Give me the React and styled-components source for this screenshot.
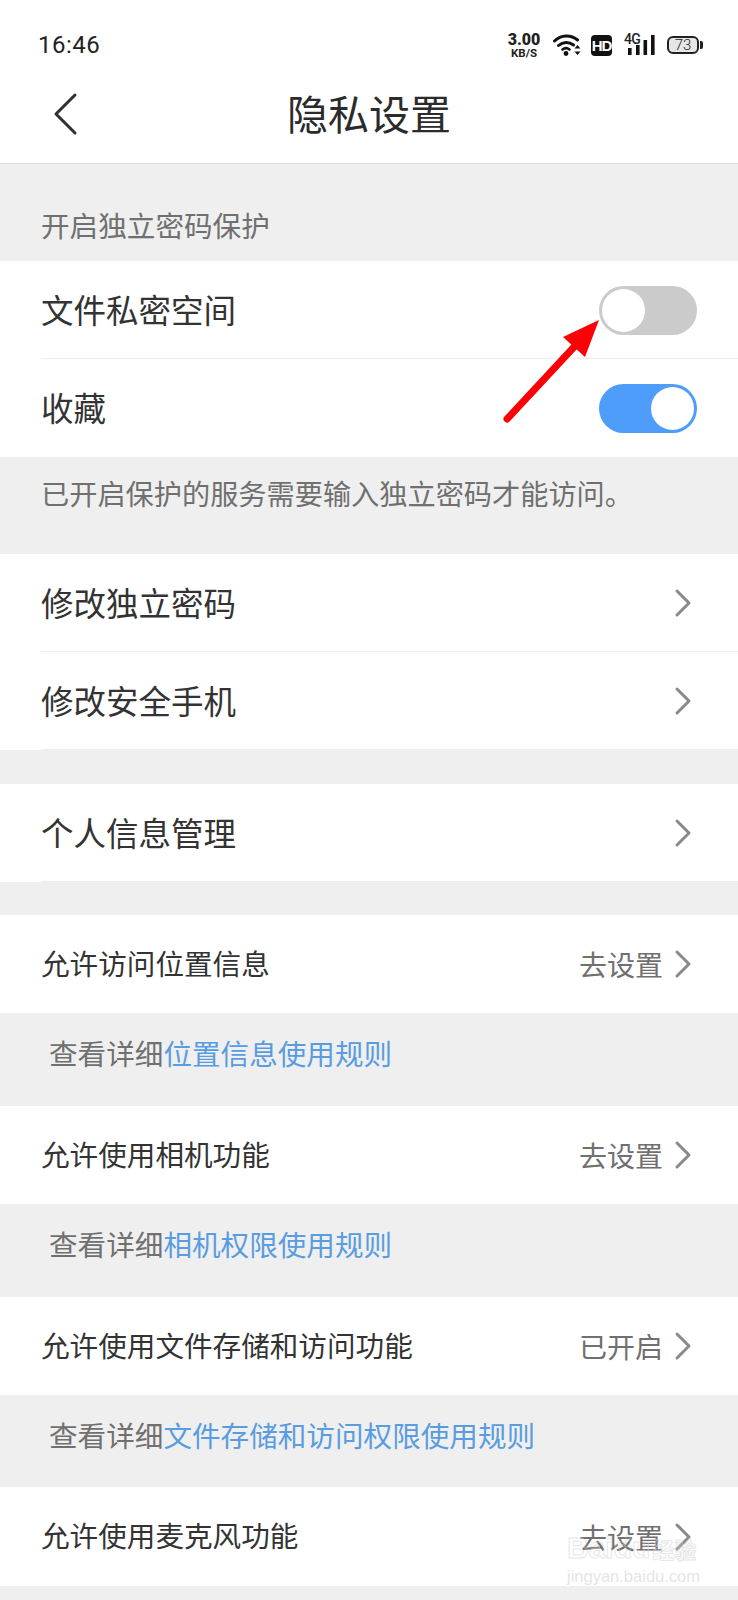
import React from "react";
import styled, { createGlobalStyle } from "styled-components";

const GlobalStyle = createGlobalStyle`
  html, body {
    margin: 0;
    padding: 0;
    background: #efefef;
  }
  * {
    box-sizing: border-box;
  }
`;

const Page = styled.div`
  position: relative;
  width: 738px;
  height: 1600px;
  overflow: hidden;
  background: #efefef;
  font-family: "Noto Sans CJK SC", "Noto Sans", sans-serif;
  color: #333;
`;

const StatusBar = styled.div`
  height: 72px;
  background: #fff;
  display: flex;
  align-items: center;
  justify-content: space-between;
  padding: 18px 36px 0 38px;
`;

const Time = styled.div`
  font-family: Roboto, sans-serif;
  font-size: 24px;
  color: #222;
  letter-spacing: 0.5px;
`;

const StatusIcons = styled.div`
  display: flex;
  align-items: center;
`;

const Speed = styled.div`
  width: 36px;
  margin-right: 11px;
  display: flex;
  flex-direction: column;
  align-items: center;
  font-family: Roboto, sans-serif;
  font-weight: 700;
  color: #222;
  b {
    font-size: 16px;
    line-height: 15px;
  }
  span {
    font-size: 11.5px;
    line-height: 12px;
  }
`;

const HdBadge = styled.div`
  width: 21px;
  height: 21px;
  margin: 0 12px 0 10px;
  border-radius: 4px;
  background: #111;
  color: #fff;
  font-family: "Liberation Sans", sans-serif;
  font-size: 15px;
  font-weight: 700;
  letter-spacing: -1px;
  display: flex;
  align-items: center;
  justify-content: center;
`;

const Signal = styled.div`
  position: relative;
  width: 32px;
  height: 22px;
  margin-right: 11px;
`;

const SignalLabel = styled.span`
  position: absolute;
  left: 0;
  top: -3px;
  font-family: Roboto, sans-serif;
  font-size: 14px;
  font-weight: 500;
  letter-spacing: -0.8px;
  color: #222;
`;

const Battery = styled.div`
  position: relative;
  width: 32px;
  height: 18px;
  margin-right: 3px;
  border: 2px solid #222;
  border-radius: 6px;
  background: #e6e6e6;
  color: #222;
  font-family: Roboto, sans-serif;
  font-size: 15px;
  font-weight: 300;
  display: flex;
  align-items: center;
  justify-content: center;
  &::after {
    content: "";
    position: absolute;
    right: -6px;
    top: 3px;
    width: 3px;
    height: 8px;
    border-radius: 0 2px 2px 0;
    background: #222;
  }
`;

const NavBar = styled.div`
  position: relative;
  height: 92px;
  background: #fff;
  border-bottom: 1px solid #dedede;
  display: flex;
  align-items: center;
  justify-content: center;
  padding-bottom: 11px;
`;

const BackIcon = styled.svg`
  position: absolute;
  left: 52px;
  top: 20px;
`;

const Title = styled.div`
  font-size: 41px;
  line-height: 48px;
  color: #2b2b2b;
`;

const SectionLabel = styled.div`
  height: 97px;
  padding: 41px 0 0 41px;
  font-size: 28.6px;
  line-height: 40px;
  color: #707070;
`;

const Row = styled.div`
  height: ${(p) => p.$height || 98}px;
  background: #fff;
  display: flex;
  align-items: center;
  padding-right: ${(p) => p.$right || 46}px;
  padding-left: 41px;
  position: relative;
  font-size: ${(p) => (p.$small ? 28.6 : 32.5)}px;
  color: #333;
  ${(p) =>
    p.$divider &&
    `&::after {
      content: "";
      position: absolute;
      left: 41px;
      right: 0;
      bottom: 0;
      height: 1px;
      background: #ececec;
    }`}
`;

const RowLabel = styled.div`
  flex: 1;
  line-height: 44px;
  padding-bottom: 3px;
`;

const RowValue = styled.div`
  font-size: 28px;
  line-height: 40px;
  color: #707070;
  margin-right: 11px;
`;

const Switch = styled.div`
  width: 98px;
  height: 49px;
  border-radius: 25px;
  padding: 3px;
  display: flex;
  justify-content: ${(p) => (p.$on ? "flex-end" : "flex-start")};
  background: ${(p) => (p.$on ? "#4f9dfb" : "#cbcbcb")};
`;

const Knob = styled.div`
  width: 43px;
  height: 43px;
  border-radius: 50%;
  background: #fff;
`;

const Note = styled.div`
  height: ${(p) => p.$height || 96}px;
  padding: ${(p) => p.$top || 16}px 0 0 ${(p) => p.$left || 41}px;
  font-size: ${(p) => p.$size || 28.6}px;
  line-height: 40px;
  color: #707070;
  white-space: nowrap;
`;

const LinkText = styled.span`
  color: #5a9ce0;
`;

const Gap = styled.div`
  height: ${(p) => p.$height || 33}px;
`;

const ArrowMark = styled.svg`
  position: absolute;
  left: 500px;
  top: 315px;
`;

const Watermark = styled.div`
  position: absolute;
  left: 567px;
  top: 1531px;
  width: 140px;
  color: transparent;
  opacity: 0.55;
`;

const WatermarkBrand = styled.div`
  display: flex;
  align-items: baseline;
  font-family: "Liberation Sans", sans-serif;
  font-size: 30px;
  line-height: 34px;
  font-weight: 700;
  -webkit-text-stroke: 1px #d4d4d4;
  span {
    font-family: "Noto Sans CJK SC", sans-serif;
    font-size: 22px;
    margin-left: 2px;
  }
`;

const WatermarkUrl = styled.div`
  margin-top: 2px;
  font-family: "Liberation Sans", sans-serif;
  font-size: 16.5px;
  line-height: 18px;
  color: #d0d0d0;
`;

const Chevron = () => (
  <svg width="18" height="30" viewBox="0 0 18 30" fill="none">
    <path
      d="M3 3 L15 15 L3 27"
      stroke="#8a8a8a"
      strokeWidth="3"
      strokeLinecap="round"
      strokeLinejoin="round"
    />
  </svg>
);

const WifiIcon = () => (
  <svg width="28" height="22" viewBox="0 0 28 22" fill="none">
    <path d="M1.5 7 C8 0.5 18 0.5 24.5 6" stroke="#111" strokeWidth="3" strokeLinecap="round" />
    <path d="M5.5 11.5 C10 7.5 16 7.5 20.5 11" stroke="#111" strokeWidth="3" strokeLinecap="round" />
    <path d="M9.5 15.5 C11.5 14 14.5 14 16.5 15.5" stroke="#111" strokeWidth="2.6" strokeLinecap="round" />
    <circle cx="13" cy="19.5" r="2.4" fill="#111" />
    <path d="M24.5 11 L27.5 14.5 H21.5 Z" fill="#111" />
    <path d="M24.5 21 L27.5 17.5 H21.5 Z" fill="#111" />
  </svg>
);

const SignalBars = () => (
  <svg width="32" height="22" viewBox="0 0 32 22" style={{ position: "absolute", left: 0, top: 0 }}>
    <rect x="4" y="14" width="3.6" height="7" fill="#111" />
    <rect x="12" y="11" width="3.6" height="10" fill="#111" />
    <rect x="19.5" y="6" width="3.6" height="15" fill="#111" />
    <rect x="27" y="1" width="3.6" height="20" fill="#111" />
  </svg>
);

const settingRows = [
  { label: "允许访问位置信息", value: "去设置", before: "查看详细", link: "位置信息使用规则", noteHeight: 93 },
  { label: "允许使用相机功能", value: "去设置", before: "查看详细", link: "相机权限使用规则", noteHeight: 93 },
  { label: "允许使用文件存储和访问功能", value: "已开启", before: "查看详细", link: "文件存储和访问权限使用规则", noteHeight: 92 },
];

export default function App() {
  return (
    <Page>
      <GlobalStyle />
      <StatusBar>
        <Time>16:46</Time>
        <StatusIcons>
          <Speed>
            <b>3.00</b>
            <span>KB/S</span>
          </Speed>
          <WifiIcon />
          <HdBadge>HD</HdBadge>
          <Signal>
            <SignalBars />
            <SignalLabel>4G</SignalLabel>
          </Signal>
          <Battery>73</Battery>
        </StatusIcons>
      </StatusBar>
      <NavBar>
        <BackIcon width="26" height="44" viewBox="0 0 26 44" fill="none">
          <path
            d="M23 3 L4 22 L23 41"
            stroke="#2f2f2f"
            strokeWidth="3"
            strokeLinecap="round"
            strokeLinejoin="round"
          />
        </BackIcon>
        <Title>隐私设置</Title>
      </NavBar>

      <SectionLabel>开启独立密码保护</SectionLabel>
      <Row $divider $right={41}>
        <RowLabel>文件私密空间</RowLabel>
        <Switch>
          <Knob />
        </Switch>
      </Row>
      <Row $right={41}>
        <RowLabel>收藏</RowLabel>
        <Switch $on>
          <Knob />
        </Switch>
      </Row>
      <Note $height={97} $top={16} $size={28.2}>
        已开启保护的服务需要输入独立密码才能访问。
      </Note>

      <Row $divider>
        <RowLabel>修改独立密码</RowLabel>
        <Chevron />
      </Row>
      <Row $divider>
        <RowLabel>修改安全手机</RowLabel>
        <Chevron />
      </Row>
      <Gap $height={34} />
      <Row $divider>
        <RowLabel>个人信息管理</RowLabel>
        <Chevron />
      </Row>
      <Gap />

      {settingRows.map((item) => (
        <React.Fragment key={item.label}>
          <Row $small>
            <RowLabel>{item.label}</RowLabel>
            <RowValue>{item.value}</RowValue>
            <Chevron />
          </Row>
          <Note $height={item.noteHeight} $top={20} $left={49}>
            {item.before}
            <LinkText>{item.link}</LinkText>
          </Note>
        </React.Fragment>
      ))}
      <Row $small $height={99}>
        <RowLabel>允许使用麦克风功能</RowLabel>
        <RowValue>去设置</RowValue>
        <Chevron />
      </Row>

      <ArrowMark width="105" height="110" viewBox="0 0 105 110" fill="none">
        <path d="M7 104 L74 32" stroke="#fb0006" strokeWidth="7" strokeLinecap="round" />
        <path d="M99 5 L63 22 L85 42 Z" fill="#fb0006" />
      </ArrowMark>

      <Watermark>
        <WatermarkBrand>
          Baidu<span>经验</span>
        </WatermarkBrand>
        <WatermarkUrl>jingyan.baidu.com</WatermarkUrl>
      </Watermark>
    </Page>
  );
}
